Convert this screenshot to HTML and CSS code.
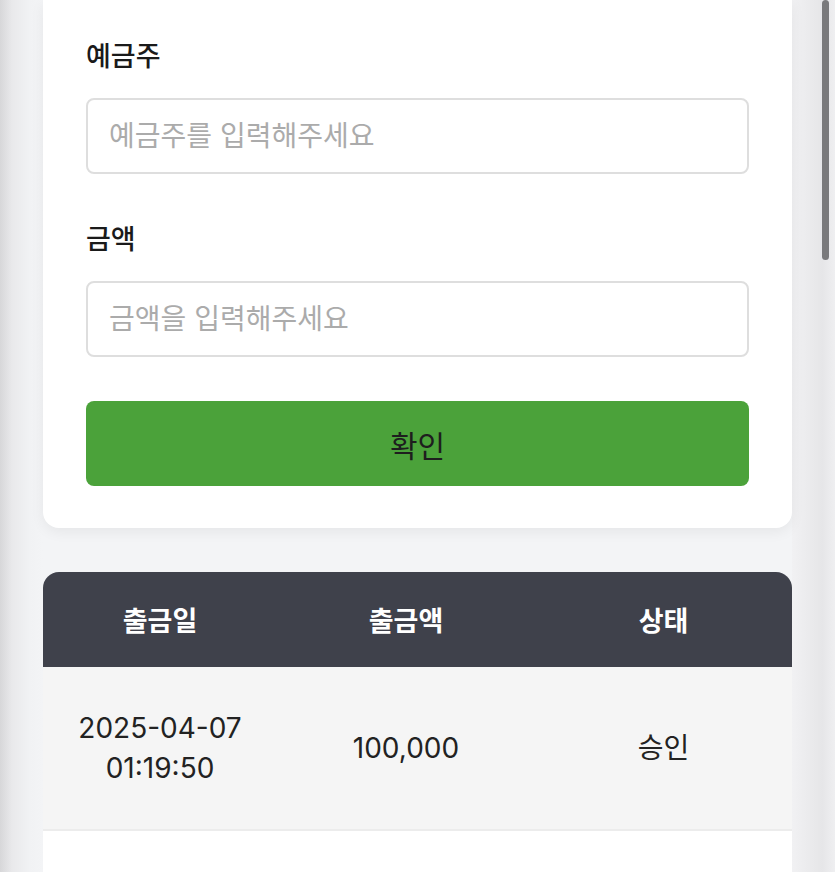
FILE: index.html
```html
<!DOCTYPE html>
<html lang="ko">
<head>
<meta charset="utf-8">
<title>출금</title>
<link rel="stylesheet" href="styles.css">
</head>
<body>
<div class="page">
  <section class="card">
    <div class="field">
      <label class="label" for="holder">예금주</label>
      <input class="input" id="holder" type="text" placeholder="예금주를 입력해주세요">
    </div>
    <div class="field">
      <label class="label" for="amount">금액</label>
      <input class="input" id="amount" type="text" placeholder="금액을 입력해주세요">
    </div>
    <button class="submit" type="button">확인</button>
  </section>

  <section class="history">
    <div class="row head">
      <div class="cell">출금일</div>
      <div class="cell">출금액</div>
      <div class="cell">상태</div>
    </div>
    <div class="row odd">
      <div class="cell">2025-04-07<br>01:19:50</div>
      <div class="cell">100,000</div>
      <div class="cell">승인</div>
    </div>
    <div class="row even">
      <div class="cell"></div>
      <div class="cell"></div>
      <div class="cell"></div>
    </div>
  </section>
</div>
<div class="scrollbar"></div>
</body>
</html>
```

FILE: styles.css
```css
* { box-sizing: border-box; }

html, body {
  margin: 0;
  padding: 0;
}

body {
  font-family: "Inter", "Noto Sans CJK KR", sans-serif;
  color: #222;
  background:
    linear-gradient(to right, #d7d7d9 0, #e9e9eb 12px, #f1f2f4 30px, #f3f4f6 43px, rgba(243,244,246,0) 43px),
    linear-gradient(to right, rgba(0,0,0,0) 792px, #f1f1f3 792px, #ececee 806px, #e6e6e8 822px, #efeff1 835px),
    #f3f4f6;
  min-height: 872px;
  overflow: hidden;
}

.page {
  padding: 0 43px;
}

.card {
  background: #fff;
  border-radius: 0 0 16px 16px;
  padding: 37px 43px 42px;
  box-shadow: 0 4px 14px rgba(0, 0, 0, 0.06);
}

.field {
  display: flex;
  flex-direction: column;
  gap: 21px;
  margin-bottom: 46px;
}

.field + .field {
  margin-bottom: 44px;
}

.label {
  font-size: 27px;
  line-height: 40px;
  font-weight: 500;
  color: #1a1a1a;
}

.input {
  height: 76px;
  border: 2px solid #dedede;
  border-radius: 8px;
  padding: 0 21px;
  font-family: inherit;
  font-size: 28px;
  color: #222;
  background: #fff;
  outline: none;
}

.input::placeholder {
  color: #ababab;
}

.submit {
  display: block;
  width: 100%;
  height: 85px;
  border: 0;
  border-radius: 8px;
  background: #4ba23a;
  color: #1e1e1e;
  font-family: inherit;
  font-size: 30px;
  font-weight: 400;
}

.history {
  margin-top: 44px;
  border-radius: 16px 16px 0 0;
  overflow: hidden;
}

.row {
  display: grid;
  grid-template-columns: 234px 258px 1fr;
  align-items: center;
  text-align: center;
}

.head {
  height: 95px;
  background: #3f414b;
  color: #fff;
  font-size: 27px;
  font-weight: 700;
}

.odd, .even {
  height: 164px;
  font-size: 28px;
  line-height: 40px;
  color: #222;
  border-bottom: 2px solid #ececec;
}

.odd { background: #f5f5f5; }
.even { background: #fff; }

.scrollbar {
  position: fixed;
  top: 0;
  left: 822px;
  width: 7px;
  height: 260px;
  border-radius: 4px;
  background: #7a7a7c;
}
```
